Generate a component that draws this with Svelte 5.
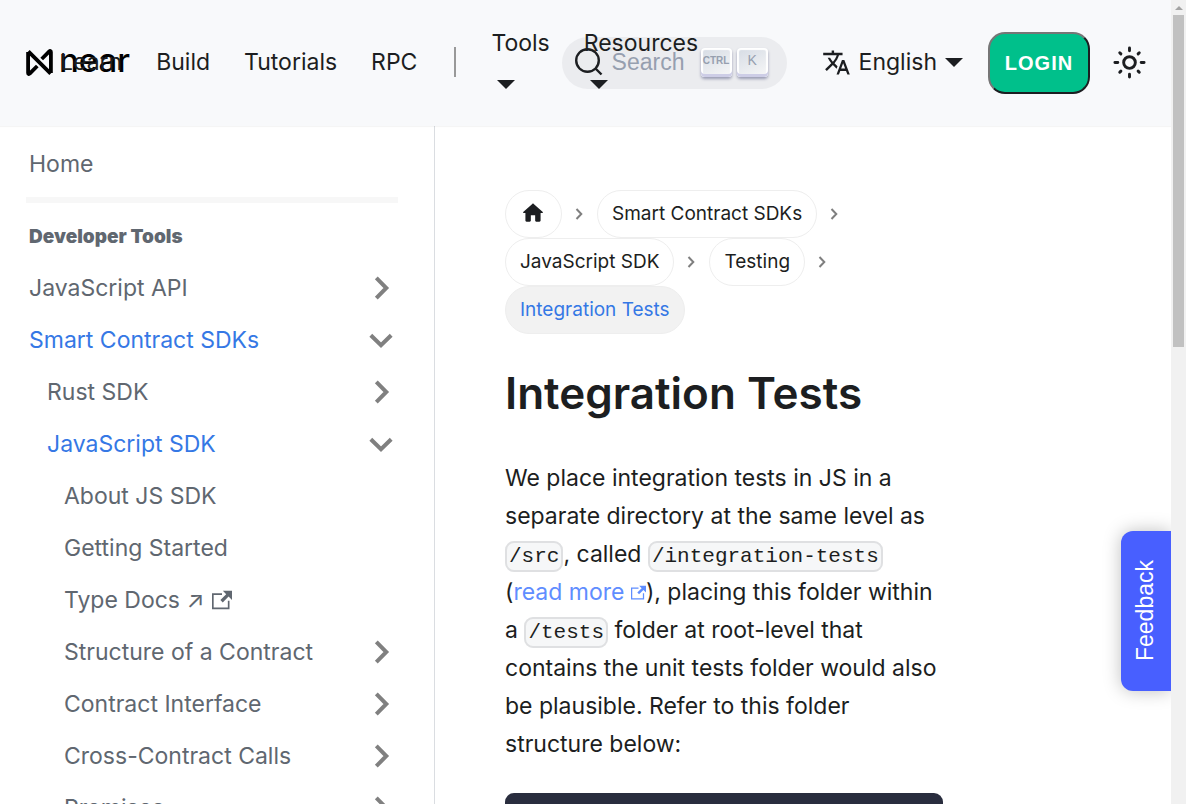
<script>
  const links = ['Learn', 'Build', 'Tutorials', 'RPC'];
  const menus = ['Tools', 'Resources'];
  const items = [
    { text: 'JavaScript API', level: 1, state: 'closed' },
    { text: 'Smart Contract SDKs', level: 1, state: 'open' },
    { text: 'Rust SDK', level: 2, state: 'closed' },
    { text: 'JavaScript SDK', level: 2, state: 'open' },
    { text: 'About JS SDK', level: 3 },
    { text: 'Getting Started', level: 3 },
    { text: 'Type Docs ↗', level: 3, external: true },
    { text: 'Structure of a Contract', level: 3, state: 'closed' },
    { text: 'Contract Interface', level: 3, state: 'closed' },
    { text: 'Cross-Contract Calls', level: 3, state: 'closed' },
    { text: 'Promises', level: 3, state: 'closed' }
  ];
  const crumbs = ['Smart Contract SDKs', 'JavaScript SDK', 'Testing'];
</script>

{#snippet external()}
  <svg class="external" viewBox="0 0 24 24" aria-hidden="true"><path d="M21 13v10h-21v-19h12v2h-10v15h17v-8h2zm3-12h-10.988l4.035 4-6.977 7.07 2.828 2.828 6.977-7.07 4.125 4.172v-11z" /></svg>
{/snippet}

{#snippet separator()}
  <svg class="separator" viewBox="0 0 8 14" aria-hidden="true"><path d="M1.5 2 6.3 7l-4.8 5" /></svg>
{/snippet}

<div class="window">
  <div class="page">
    <header>
      <a class="brand" href="#home" aria-label="near">
        <svg class="mark" viewBox="0 0 27 27" aria-hidden="true">
          <path d="M2.1 3v21c0 1.1.9 1.4 1.6.6L11.3 17M24.9 24V3c0-1.1-.9-1.4-1.6-.6L15.7 10M2.3 2.3l22.4 22.4" />
        </svg>
        <span>near</span>
      </a>
      <nav class="links" aria-label="Main">
        {#each links as link}<a href="#{link}">{link}</a>{/each}
        <span class="divider"></span>
        {#each menus as menu}
          <a class="menu" href="#{menu}">{menu}<span class="caret"></span></a>
        {/each}
      </nav>
      <div class="tools">
        <button class="search" type="button">
          <svg viewBox="0 0 28 28" aria-hidden="true"><circle cx="12.5" cy="12.5" r="11.3" /><path d="m20.5 20.5 6 6" /></svg>
          <span class="placeholder">Search</span>
          <kbd class="ctrl">CTRL</kbd>
          <kbd>K</kbd>
        </button>
        <a class="language" href="#language">
          <svg viewBox="0 0 24 24" aria-hidden="true"><path d="M12.87 15.07l-2.54-2.51.03-.03c1.74-1.94 2.98-4.17 3.71-6.53H17V4h-7V2H8v2H1v1.99h11.17C11.5 7.92 10.44 9.75 9 11.35 8.07 10.32 7.3 9.19 6.69 8h-2c.73 1.63 1.73 3.17 2.98 4.56l-5.09 5.02L4 19l5-5 3.11 3.11.76-2.04zM18.5 10h-2L12 22h2l1.12-3h4.75L21 22h2l-4.5-12zm-2.62 7l1.62-4.33L19.12 17h-3.24z" /></svg>
          English<span class="caret"></span>
        </a>
        <button class="login" type="button">LOGIN</button>
        <button class="theme" type="button" aria-label="Switch theme">
          <svg viewBox="0 0 24 24" aria-hidden="true"><circle cx="12" cy="12" r="4" /><path d="M2 12h2M20 12h2M12 2v2M12 20v2M5.3 5.3l.8.8M17.9 17.9l.8.8M18.7 5.3l-.8.8M6.1 17.9l-.8.8" /></svg>
        </button>
      </div>
    </header>

    <div class="body">
      <aside>
        <a class="item level1" href="#Home">Home</a>
        <hr />
        <p class="category">Developer Tools</p>
        {#each items as item}
          <a class="item level{item.level}" class:active={item.state === 'open'} href="#{item.text}">
            <span>{item.text}</span>
            {#if item.external}{@render external()}{/if}
            {#if item.state}
              <svg class="chevron" class:down={item.state === 'open'} viewBox="0 0 24 24" aria-hidden="true"><path d="m7.3 1.8 10 10.2-10 10.2" /></svg>
            {/if}
          </a>
        {/each}
      </aside>

      <main>
        <article>
          <nav class="crumbs" aria-label="Breadcrumbs">
            <span class="crumb">
              <a class="pill home" href="#Home" aria-label="Home page"><svg viewBox="0 0 24 24" aria-hidden="true"><path d="M10 19v-5h4v5c0 .55.45 1 1 1h3c.55 0 1-.45 1-1v-7h1.7c.46 0 .68-.57.33-.87L12.67 3.6c-.38-.34-.96-.34-1.34 0l-8.36 7.53c-.34.3-.13.87.33.87H5v7c0 .55.45 1 1 1h3c.55 0 1-.45 1-1z" /></svg></a>
              {@render separator()}
            </span>
            {#each crumbs as crumb}
              <span class="crumb"><a class="pill" href="#{crumb}">{crumb}</a>{@render separator()}</span>
            {/each}
            <span class="crumb"><span class="pill current">Integration Tests</span></span>
          </nav>
          <h1>Integration Tests</h1>
          <p class="text">
            We place integration tests in JS in a separate directory at the same level as <code>/src</code>, called <code>/integration-tests</code> (<a href="#more">read more {@render external()}</a>), placing this folder within a <code>/tests</code> folder at root-level that contains the unit tests folder would also be plausible. Refer to this folder structure below:
          </p>
          <div class="codeblock"></div>
        </article>
      </main>
    </div>
    <button class="feedback" type="button"><span>Feedback</span></button>
  </div>
  <div class="scrollbar"><span class="up"></span><span class="thumb"></span></div>
</div>

<style>
  :global(body) { margin: 0; }
  .window {
    display: grid;
    grid-template-columns: minmax(0, 1fr) 15px;
    height: 100vh;
    overflow: hidden;
    background: #fff;
    color: #1c1e21;
    font: 400 23px/38px Inter, sans-serif;
  }
  .window * { box-sizing: border-box; }
  a { color: inherit; text-decoration: none; }
  button { font: inherit; color: inherit; border: 0; margin: 0; padding: 0; background: none; }
  svg { flex: none; display: block; fill: currentColor; }

  .page { position: relative; display: flex; flex-direction: column; min-width: 0; min-height: 0; }
  header {
    display: flex;
    align-items: center;
    height: 126px;
    flex: none;
    padding: 0 24px 2px 26px;
    background: #f8f9fb;
    box-shadow: 0 1px 1px rgba(0, 0, 0, .04);
    z-index: 1;
  }
  .brand { display: flex; align-items: center; gap: 6px; width: 17px; color: #000; font-size: 33px; line-height: 34px; font-weight: 500; }
  .brand span { padding-bottom: 4px; }
  .mark { width: 27px; height: 27px; fill: none; stroke: currentColor; stroke-width: 3.8; }
  .brand, .links { white-space: nowrap; }
  .links { display: flex; align-items: center; flex: 1; min-width: 0; position: relative; z-index: 1; }
  .links a { padding: 0 17px; }
  .links .menu { display: flex; flex-direction: column; }
  .divider { flex: none; width: 2px; height: 30px; margin: 0 18px 0 20px; background: #999; }
  .caret { display: inline-block; border: 9px solid transparent; border-top-color: currentColor; border-bottom: 0; }
  .menu .caret { align-self: flex-start; margin: 18px 6px 11px; }

  .tools { display: flex; align-items: center; flex: none; }
  .search { display: flex; align-items: center; width: 225px; height: 52px; margin-top: 2px; padding: 0 19px 2px 13px; border-radius: 26px; background: #ebecef; font-family: "Liberation Sans", sans-serif; }
  .search svg { width: 28px; height: 28px; fill: none; stroke: #1c1e21; stroke-width: 2.4; }
  .placeholder { margin: 0 auto 0 9px; color: #969faf; }
  kbd {
    width: 31px; height: 29px; margin-left: 5px; border-radius: 4px;
    background: linear-gradient(-26deg, #f8f8f8, #d5dbe4);
    box-shadow: inset 0 -3px 0 #cdcde6, inset 0 0 1px 2px #fff, 0 2px 3px rgba(30, 35, 90, .4);
    color: #969faf; font: 14px/25px "Liberation Sans", sans-serif;
  }
  .ctrl { font: bold 10px/26px "Liberation Sans Narrow", "Liberation Sans", sans-serif; }
  .language { display: flex; align-items: center; gap: 8px; margin: 0 25px 0 35px; }
  .language svg { width: 29px; height: 29px; }
  .login { width: 102px; height: 62px; margin-top: 2px; border: 2px solid; border-color: #767676 #1c1e21 #1c1e21 #767676; border-radius: 17px; background: #00c08b; color: #fff; font: bold 20px/24px "Liberation Sans", sans-serif; letter-spacing: 1px; }
  .theme { margin-left: 22px; }
  .theme svg { width: 35px; height: 35px; fill: none; stroke: currentColor; stroke-width: 2; stroke-linecap: round; }

  .body { display: flex; flex: 1; min-height: 0; overflow: hidden; }
  aside { flex: none; width: 435px; padding: 12px 36px 0 26px; border-right: 1px solid #dadde1; color: #606770; overflow: hidden; }
  .item { display: flex; align-items: center; height: 52px; padding-left: 3px; }
  .level2 { padding-left: 21px; }
  .level3 { padding-left: 38px; }
  .active { color: #3578e5; }
  .item .external { width: 20px; height: 20px; margin-left: 8px; }
  .chevron { width: 24px; height: 24px; margin: 0 5px 0 auto; fill: none; stroke: #808080; stroke-width: 4; }
  .down { transform: rotate(90deg); }
  hr { height: 6px; margin: 7px 0 15px; border: 0; background: #f7f7f7; }
  .category { margin: 0; padding: 0 3px 6px; font-size: 19px; font-weight: 900; }

  main { flex: 1; min-width: 0; padding: 64px 82px 0 70px; }
  article { width: 75%; }
  .crumbs { display: flex; flex-wrap: wrap; font-size: 19px; line-height: 30px; }
  .crumb { display: flex; align-items: center; }
  .pill { display: block; padding: 8px 14px; border: 1px solid #eee; border-radius: 24px; }
  .home { display: flex; align-items: center; height: 48px; padding: 0 15px 2px 14px; }
  .home svg { width: 26px; height: 26px; }
  .current { background: #f2f2f2; color: #3578e5; }
  .separator { width: 8px; height: 14px; margin: 0 14px 0 13px; fill: none; stroke: #7f7f7f; stroke-width: 2; }
  h1 { margin: 32px 0 39px; font-size: 44px; line-height: 54px; font-weight: 600; }
  .text { margin: 0 0 30px; }
  .text a { color: #5f8dff; }
  .text .external { display: inline-block; width: 15px; height: 15px; }
  code { padding: 2px; border: 2px solid #dfe0e2; border-radius: 9px; background: #f6f7f8; font: 400 21px/24px "Liberation Mono", monospace; }
  .codeblock { height: 120px; border-radius: 9px; background: #292d3e; }

  .feedback { position: absolute; right: 0; top: 66%; width: 50px; height: 160px; border-radius: 12px 0 0 12px; background: #485fff; color: #fff; box-shadow: 0 0 18px rgba(0, 0, 0, .25); font-family: "Liberation Sans", sans-serif; z-index: 2; }
  .feedback span { display: block; margin: 0 auto; padding-left: 2px; writing-mode: vertical-rl; transform: rotate(180deg); }
  .scrollbar { display: flex; flex-direction: column; align-items: center; background: #f1f1f1; z-index: 3; }
  .up { margin: 6px 0 5px; border: 4px solid transparent; border-top: 0; border-bottom-color: #a3a3a3; }
  .thumb { width: 11px; height: 332px; background: #c1c1c1; }
</style>
